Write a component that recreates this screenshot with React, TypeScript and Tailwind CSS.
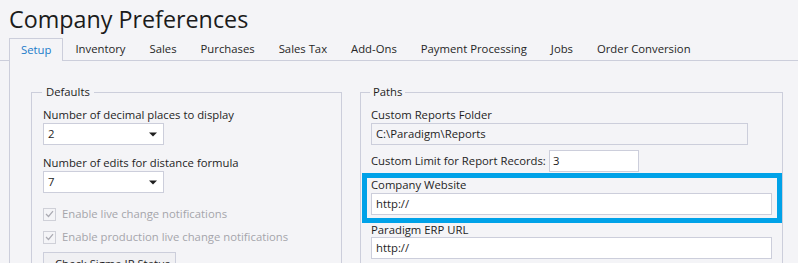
import React from "react";

const tabs = [
  "Setup",
  "Inventory",
  "Sales",
  "Purchases",
  "Sales Tax",
  "Add-Ons",
  "Payment Processing",
  "Jobs",
  "Order Conversion",
];

function Combo({ value }: { value: string }) {
  return (
    <div className="flex h-[22px] w-[121px] items-center justify-between border border-[#cccedb] bg-white pl-[4px] pr-[6px]">
      <span>{value}</span>
      <svg width="8" height="5" viewBox="0 0 8 5">
        <path d="M0 0.5 L8 0.5 L4 4.5 Z" fill="#1e1e1e" />
      </svg>
    </div>
  );
}

function Check({ label }: { label: string }) {
  return (
    <div className="flex h-[16px] items-center leading-[16px] text-[#a5a5ab]">
      <div className="flex h-[13px] w-[13px] items-center justify-center border border-[#cfd0d8] bg-[#f4f4f7]">
        <svg width="9" height="8" viewBox="0 0 9 8">
          <path d="M1 4 L3.5 6.5 L8 1.2" fill="none" stroke="#aaaab2" strokeWidth="1.2" />
        </svg>
      </div>
      <span className="ml-[6px]">{label}</span>
    </div>
  );
}

export default function App() {
  return (
    <div className="h-[263px] w-[798px] overflow-hidden bg-[#f4f4f7] font-['Open_Sans',sans-serif] text-[11.3px] text-[#1e1e1e]">
      <div className="h-[38px] pl-[9px] text-[23.3px] leading-[38px] text-[#1b1b1b]">
        Company Preferences
      </div>
      <div className="flex h-[23px] border-b border-[#cccedb] pl-[9px]">
        {tabs.map((t, i) =>
          i === 0 ? (
            <div
              key={t}
              className="relative h-[23px] border-x border-t border-[#cccedb] bg-[#f4f4f7] px-[11px] leading-[22px] text-[#1a7bc9]"
            >
              {t}
            </div>
          ) : (
            <div key={t} className="px-[12px] leading-[22px] text-[#262626]">
              {t}
            </div>
          )
        )}
      </div>
      <div className="ml-[9px] flex h-[240px] items-start border-l border-[#cccedb] pl-[21px] pt-[23px]">
        <fieldset className="w-[311px] border border-[#cccedb] px-[11px] pb-[10px] pt-[7px]">
          <legend className="-ml-px px-[4px] leading-[16px]">Defaults</legend>
          <div className="leading-[16px]">Number of decimal places to display</div>
          <Combo value="2" />
          <div className="mt-[10px] leading-[16px]">Number of edits for distance formula</div>
          <Combo value="7" />
          <div className="mt-[13px]">
            <Check label="Enable live change notifications" />
          </div>
          <div className="mt-[7px]">
            <Check label="Enable production live change notifications" />
          </div>
          <div className="mt-[7px] flex h-[24px] w-[133px] items-center border border-[#cccedb] bg-[#f0f0f3] pl-[11px]">
            Check Sigma IP Status
          </div>
        </fieldset>
        <fieldset className="ml-[18px] w-[423px] border border-[#cccedb] px-[10px] pb-[10px] pt-[7px]">
          <legend className="-ml-px px-[3px] leading-[16px]">Paths</legend>
          <div className="leading-[16px]">Custom Reports Folder</div>
          <div className="flex h-[22px] w-[377px] items-center border border-[#cccedb] pl-[4px]">
            C:\Paradigm\Reports
          </div>
          <div className="mt-[5px] flex h-[22px] items-center">
            <div className="w-[178px]">Custom Limit for Report Records:</div>
            <div className="flex h-[22px] w-[90px] items-center border border-[#cccedb] bg-white pl-[3px]">
              3
            </div>
          </div>
          <div className="-ml-[9px] -mr-[10px] mt-[1px] border-[5px] border-[#00a2e8] pb-[3px] pl-[4px] pr-[5px]">
            <div className="leading-[14px]">Company Website</div>
            <div className="mt-[1px] flex h-[22px] items-center border border-[#cccedb] bg-white pl-[4px]">
              http://
            </div>
          </div>
          <div className="leading-[14px]">Paradigm ERP URL</div>
          <div className="flex h-[22px] items-center border border-[#cccedb] bg-white pl-[4px]">
            http://
          </div>
        </fieldset>
      </div>
    </div>
  );
}
